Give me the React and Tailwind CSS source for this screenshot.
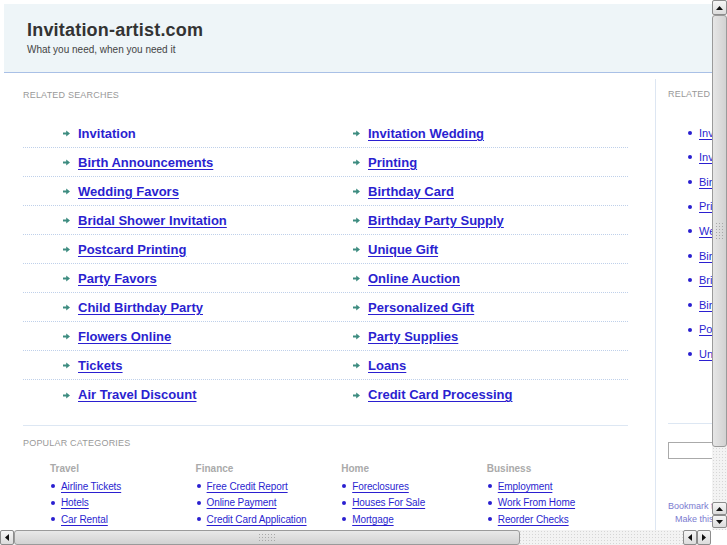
import React from 'react';

const leftLinks = ['Invitation', 'Birth Announcements', 'Wedding Favors', 'Bridal Shower Invitation', 'Postcard Printing', 'Party Favors', 'Child Birthday Party', 'Flowers Online', 'Tickets', 'Air Travel Discount'];
const rightLinks = ['Invitation Wedding', 'Printing', 'Birthday Card', 'Birthday Party Supply', 'Unique Gift', 'Online Auction', 'Personalized Gift', 'Party Supplies', 'Loans', 'Credit Card Processing'];
const sideLinks = ['Invitation', 'Invitation Wedding', 'Birth Announcements', 'Printing', 'Wedding Favors', 'Birthday Card', 'Bridal Shower Invitation', 'Birthday Party Supply', 'Postcard Printing', 'Unique Gift'];

const categories = [
  { title: 'Travel', items: ['Airline Tickets', 'Hotels', 'Car Rental'] },
  { title: 'Finance', items: ['Free Credit Report', 'Online Payment', 'Credit Card Application'] },
  { title: 'Home', items: ['Foreclosures', 'Houses For Sale', 'Mortgage'] },
  { title: 'Business', items: ['Employment', 'Work From Home', 'Reorder Checks'] },
];

const Arrow = () => (
  <svg width="7" height="7" viewBox="0 0 7 7" className="shrink-0">
    <path d="M0 2.6h3.2V0.6L7 3.5 3.2 6.4V4.4H0z" fill="#3d8c80" />
  </svg>
);

const Tri = ({ dir }) => {
  const d = {
    up: 'M0 4L3.5 0L7 4z',
    down: 'M0 0L7 0L3.5 4z',
    left: 'M4 0L4 7L0 3.5z',
    right: 'M0 0L4 3.5L0 7z',
  }[dir];
  const vert = dir === 'up' || dir === 'down';
  return (
    <svg width={vert ? 7 : 4} height={vert ? 4 : 7} viewBox={vert ? '0 0 7 4' : '0 0 4 7'}>
      <path d={d} fill="#111" />
    </svg>
  );
};

const Btn = ({ dir, className }) => (
  <div className={`flex items-center justify-center border border-[#8c8c8c] rounded-[2px] bg-gradient-to-b from-[#f6f6f6] to-[#dcdcdc] ${className}`}>
    <Tri dir={dir} />
  </div>
);

const track = 'bg-[#f3f3f3] bg-[radial-gradient(circle,#d6d6d6_0.7px,transparent_0.9px)] bg-[length:3px_3px]';
const grip = 'bg-[radial-gradient(circle,#a8a8a8_0.7px,transparent_0.9px)] bg-[length:3px_3px]';

const VScroll = () => (
  <div className={`w-[15px] h-[530px] flex flex-col ${track}`}>
    <Btn dir="up" className="h-[15px] w-[15px]" />
    <div className="h-[432px] border border-[#9a9a9a] rounded-[3px] bg-gradient-to-r from-[#e6e6e6] to-[#d2d2d2] flex items-center justify-center">
      <div className={`w-[9px] h-[18px] ${grip}`} />
    </div>
    <div className="flex-1" />
    <Btn dir="up" className="h-[13px] w-[15px]" />
    <Btn dir="down" className="h-[13px] w-[15px] mb-[2px]" />
  </div>
);

const HScroll = () => (
  <div className={`h-[15px] flex ${track}`}>
    <Btn dir="left" className="w-[14px] h-[15px]" />
    <div className="w-[506px] border border-[#9a9a9a] rounded-[3px] bg-gradient-to-b from-[#e8e8e8] to-[#d2d2d2] flex items-center justify-center">
      <div className={`w-[18px] h-[9px] ${grip}`} />
    </div>
    <div className="flex-1" />
    <Btn dir="left" className="w-[14px] h-[15px]" />
    <Btn dir="right" className="w-[14px] h-[15px]" />
    <div className="w-[16px] h-[15px] bg-white" />
  </div>
);

const Page = () => (
  <div className="w-[941px] pt-[4px] pl-[4px]">
    <div className="h-[69px] bg-[#eef5f8] border-b border-[#a9c0e6] pl-[23px] pt-[15px]">
      <div className="text-[18px] leading-[22px] font-bold text-[#333] tracking-[0.2px]">Invitation-artist.com</div>
      <div className="mt-[3px] text-[10px] leading-[12px] text-[#444]">What you need, when you need it</div>
    </div>

    <div className="flex pl-[19px]">
      <div className="w-[605px] shrink-0 pt-[17px]">
        <div className="text-[9px] leading-[11px] text-[#999] tracking-[0.2px]">RELATED SEARCHES</div>
        <div className="mt-[18px]">
          {leftLinks.map((l, i) => (
            <div
              key={l}
              className={`h-[29px] pt-[1px] flex items-center ${i < leftLinks.length - 1 ? 'border-b border-dotted border-[#bfd0ea]' : ''}`}
            >
              <div className="w-[330px] shrink-0 pl-[40px] flex items-center gap-[8px]">
                <Arrow />
                <a className={`text-[13px] font-bold text-[#2b1fd0] ${i === 0 ? '' : 'underline underline-offset-2'}`}>{l}</a>
              </div>
              <div className="flex items-center gap-[8px]">
                <Arrow />
                <a className="text-[13px] font-bold text-[#2b1fd0] underline underline-offset-2">{rightLinks[i]}</a>
              </div>
            </div>
          ))}
        </div>
        <div className="mt-[16px] border-t border-[#dde7f3]" />
        <div className="mt-[12px] text-[9px] leading-[11px] text-[#999] tracking-[0.2px]">POPULAR CATEGORIES</div>
        <div className="mt-[14px] pl-[27px] flex">
          {categories.map(c => (
            <div key={c.title} className="w-[145.6px] shrink-0">
              <div className="text-[10px] leading-[12px] font-bold text-[#aaa]">{c.title}</div>
              <div className="mt-[3px]">
                {c.items.map(it => (
                  <div key={it} className="h-[16.5px] flex items-center">
                    <span className="w-[4px] h-[4px] rounded-full bg-[#2a1fd0] ml-[1px] mr-[6px]" />
                    <a className="text-[10px] text-[#2b1fd0] underline underline-offset-2 tracking-[-0.1px]">{it}</a>
                  </div>
                ))}
              </div>
            </div>
          ))}
        </div>
      </div>

      <div className="ml-[27px] mt-[6px] border-l border-[#dde6f2] pl-[12px] pt-[10px] h-[460px] flex-1">
        <div className="text-[9px] leading-[11px] text-[#999] tracking-[0.2px]">RELATED SEARCHES</div>
        <div className="mt-[20.5px] pl-[20px]">
          {sideLinks.map(l => (
            <div key={l} className="h-[24.6px] flex items-center">
              <span className="w-[4px] h-[4px] rounded-full bg-[#2a1fd0] mr-[7px]" />
              <a className="text-[11px] text-[#2b1fd0] underline underline-offset-2">{l}</a>
            </div>
          ))}
        </div>
        <div className="mt-[57px] border-t border-[#dde7f3] w-[200px]" />
        <div className="mt-[18px] w-[150px] h-[17px] border border-[#aaa]" />
        <div className="mt-[41px] text-[9px] leading-[13px] text-[#7b7bd0]">
          <div>Bookmark this page</div>
          <div className="pl-[7px]">Make this your Homepage</div>
        </div>
      </div>
    </div>
  </div>
);

export default function App() {
  return (
    <div className="w-[727px] h-[545px] flex flex-col bg-white overflow-hidden font-['Liberation_Sans',Arial,sans-serif]">
      <div className="flex h-[530px]">
        <div className="w-[712px] h-[530px] overflow-hidden">
          <Page />
        </div>
        <VScroll />
      </div>
      <HScroll />
    </div>
  );
}
